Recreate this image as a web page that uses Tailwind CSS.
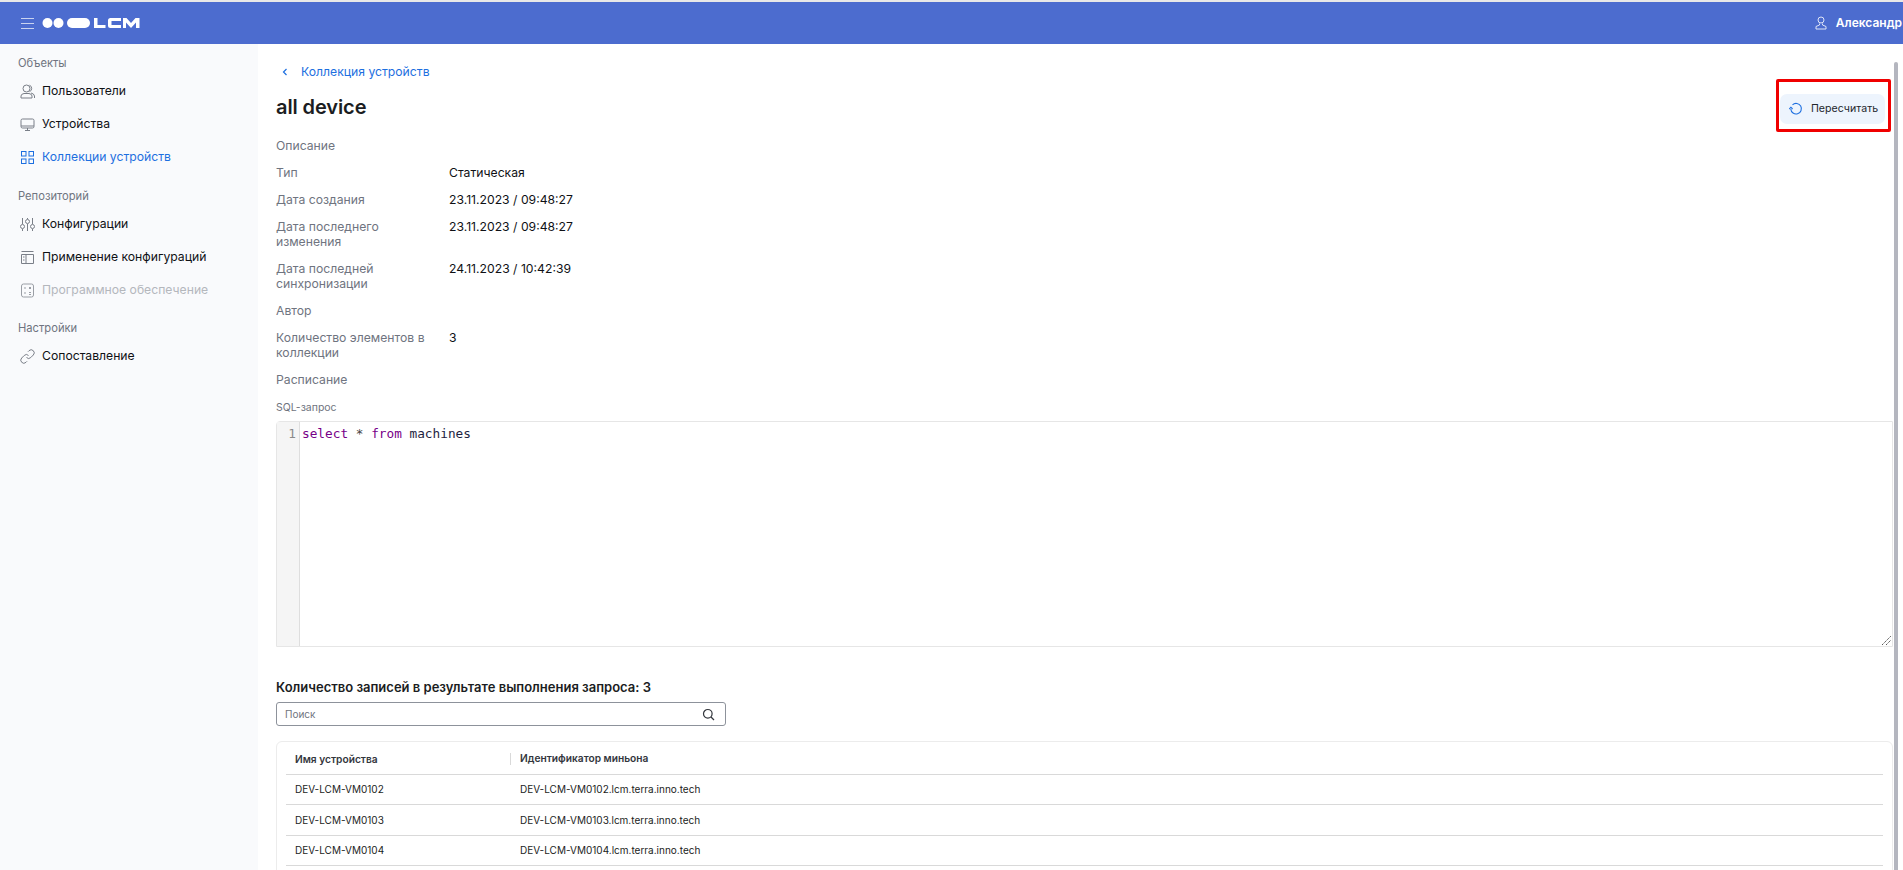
<!doctype html>
<html lang="ru"><head><meta charset="utf-8"><script src="https://cdn.jsdelivr.net/npm/@tailwindcss/browser@4"></script></head>
<body class="font-['Inter',sans-serif] bg-white overflow-hidden">
<div class="h-[870px] w-[1903px] flex flex-col overflow-hidden pt-[2px] bg-[#e8e8e8]">
<header class="h-[42px] shrink-0 bg-[#4c6ccf] flex items-center pl-[21px] text-white">
  <svg width="13" height="13" viewBox="0 0 13 13" class="text-[#c9d3f0]" stroke="currentColor" fill="none"><path d="M0 1.5h13M0 6.5h13M0 11.5h13"/></svg>
  <svg width="99" height="12" viewBox="0 0 99 12" class="ml-[8px]" fill="#fff"><circle cx="5.5" cy="6" r="5"/><circle cx="16.5" cy="6" r="5"/><rect x="25" y="1" width="23" height="10" rx="5"/><path d="M52 1h3.500v7h8v3h-11.500zM66 3.500q0-2.500 2.500-2.500h10.500v3h-9.500v4h9.500v3h-10.500q-2.500 0-2.500-2.500zM81 11v-10h3.500l4.500 5 4.500-5h4v10h-3.500v-5.500l-5 5.500-5-5.500v5.500z"/></svg>
  <div class="ml-auto flex items-center gap-[9px] font-semibold text-[12px] whitespace-nowrap pr-[1px]">
    <svg width="12" height="14" viewBox="0 0 12 14" fill="none" stroke="#dfe5f7"><circle cx="6" cy="4" r="3"/><path d="M4.500 7.500v1.500L1 10.500v2.500h10v-2.500L7.500 9V7.500"/></svg>
    <span>Александр</span>
  </div>
</header>
<div class="flex flex-1 min-h-0 bg-white">
  <aside class="w-[258px] shrink-0 bg-[#f9fafc] pt-[12px] text-[12.2px] text-[#0f1115]">
    <div class="pl-[18px] text-[11.2px] leading-[15px] text-[#6f7480]">Объекты</div>
    <nav class="mt-[4px] flex flex-col">
      <a class="h-[33px] flex items-center pl-[20px] gap-[7px]"><svg width="15" height="15" viewBox="0 0 15 15" fill="none" stroke="#7a7f88"><circle cx="6.500" cy="4.500" r="3.500"/><path d="M1 14v-2q0-2 3-2.500h5q3 .5 3 2.500v2zM9.500 1.200a3.500 3.500 0 0 1 0 6.500M11 9q3 .5 3.500 3v2"/></svg><span>Пользователи</span></a>
      <a class="h-[33px] flex items-center pl-[20px] gap-[7px]"><svg width="15" height="15" viewBox="0 0 15 15" fill="none" stroke="#7a7f88"><rect x="1" y="2" width="13" height="9" rx="1.500"/><path d="M5 13.500h5M7.500 11v2.500"/><path d="M1 9h13"/></svg><span>Устройства</span></a>
      <a class="h-[33px] flex items-center pl-[20px] gap-[7px] text-[#1d6fe0]"><svg width="15" height="15" viewBox="0 0 15 15" fill="none" stroke="#1d6fe0"><rect x="1.500" y="1.500" width="4.500" height="4.500"/><rect x="9" y="1.500" width="4.500" height="4.500"/><rect x="1.500" y="9" width="4.500" height="4.500"/><rect x="9" y="9" width="4.500" height="4.500"/></svg><span>Коллекции устройств</span></a>
    </nav>
    <div class="pl-[18px] mt-[15px] text-[11.2px] leading-[15px] text-[#6f7480]">Репозиторий</div>
    <nav class="mt-[4px] flex flex-col">
      <a class="h-[33px] flex items-center pl-[20px] gap-[7px]"><svg width="15" height="15" viewBox="0 0 15 15" fill="none" stroke="#7a7f88"><path d="M2.500 1v6M2.500 12v2M7.500 1v1M7.500 7v7M12.500 1v6M12.500 12v2"/><circle cx="2.500" cy="9.500" r="2"/><circle cx="7.500" cy="4.500" r="2"/><circle cx="12.500" cy="9.500" r="2"/></svg><span>Конфигурации</span></a>
      <a class="h-[33px] flex items-center pl-[20px] gap-[7px]"><svg width="15" height="15" viewBox="0 0 15 15" fill="none" stroke="#7a7f88"><path d="M1.500 1.500h12M1.500 4.500h12v9h-12zM6 4.500v9"/><path d="M3 7h1.500M3 10h1.500"/></svg><span>Применение конфигураций</span></a>
      <a class="h-[33px] flex items-center pl-[20px] gap-[7px] text-[#b4b7bc]"><svg width="15" height="15" viewBox="0 0 15 15" fill="none" stroke="#9a9ea5"><rect x="1.500" y="1" width="12" height="13" rx="2"/><path d="M4 5h2M9 4l2 2M11 4l-2 2M4 10h2M9 9.500h2M9 11.500h2"/></svg><span>Программное обеспечение</span></a>
    </nav>
    <div class="pl-[18px] mt-[14px] text-[11.2px] leading-[15px] text-[#6f7480]">Настройки</div>
    <nav class="mt-[4px] flex flex-col">
      <a class="h-[33px] flex items-center pl-[20px] gap-[7px]"><svg width="15" height="15" viewBox="0 0 15 15" fill="none" stroke="#7a7f88"><path d="M6.500 8.500a3 3 0 0 0 4.300 0l2.500-2.500a3 3 0 0 0-4.300-4.300l-1 1M8.500 6.500a3 3 0 0 0-4.300 0L1.700 9a3 3 0 0 0 4.300 4.300l1-1"/></svg><span>Сопоставление</span></a>
    </nav>
  </aside>
  <main class="relative flex-1 min-w-0 pl-[18px] pr-[10px] pt-[20px] text-[12.2px] overflow-hidden">
    <div class="flex items-center h-[16px] text-[#1d6fe0]"><svg width="8" height="8" viewBox="0 0 8 8" fill="none" stroke="#1d6fe0" stroke-width="1.200" class="ml-[5px]"><path d="M5.500 1 2.500 4l3 3"/></svg><span class="ml-[12px]">Коллекция устройств</span></div>
    <h1 class="mt-[13px] text-[20px] leading-[28px] font-semibold text-[#1b1d22] tracking-[-0.1px]">all device</h1>
    <dl class="mt-[17px] grid grid-cols-[173px_1fr] gap-y-[12px] leading-[15px] text-[#0f1115]">
      <dt class="text-[#6f7480] w-[155px]">Описание</dt><dd></dd>
      <dt class="text-[#6f7480] w-[155px]">Тип</dt><dd>Статическая</dd>
      <dt class="text-[#6f7480] w-[155px]">Дата создания</dt><dd>23.11.2023 / 09:48:27</dd>
      <dt class="text-[#6f7480] w-[155px]">Дата последнего изменения</dt><dd>23.11.2023 / 09:48:27</dd>
      <dt class="text-[#6f7480] w-[155px]">Дата последней синхронизации</dt><dd>24.11.2023 / 10:42:39</dd>
      <dt class="text-[#6f7480] w-[155px]">Автор</dt><dd></dd>
      <dt class="text-[#6f7480] w-[155px]">Количество элементов в коллекции</dt><dd>3</dd>
      <dt class="text-[#6f7480] w-[155px]">Расписание</dt><dd></dd>
    </dl>
    <div class="mt-[14px] text-[10.5px] leading-[14px] text-[#6f7480]">SQL-запрос</div>
    <div class="relative mt-[6px] h-[226px] w-[1617px] flex border border-[#e6e6e6] rounded-tl-[4px]">
      <div class="w-[23px] bg-[#f5f5f5] border-r border-[#dedede] text-right pr-[3px] pt-[4px] font-['DejaVu_Sans_Mono',monospace] text-[12.75px] leading-[16px] text-[#8a8a8a]">1</div>
      <div class="pl-[2px] pt-[4px] font-['DejaVu_Sans_Mono',monospace] text-[12.75px] leading-[16px] text-[#1e1e3f]"><span class="text-[#770088]">select</span> <span class="text-[#444]">*</span> <span class="text-[#770088]">from</span> machines</div>
      <svg width="9" height="9" viewBox="0 0 9 9" class="absolute right-[1px] bottom-[1px]" stroke="#555" stroke-dasharray="1.500 .7"><path d="M0 9 9 0M4 9l5-5"/></svg>
    </div>
    <h2 class="mt-[32px] text-[13px] leading-[16px] font-semibold text-[#1b1d22]">Количество записей в результате выполнения запроса: 3</h2>
    <div class="mt-[7px] w-[450px] h-[24px] border border-[#8d929b] rounded-[3px] flex items-center pl-[8px] pr-[10px] text-[10px] text-[#6f7480]"><span>Поиск</span><svg width="13" height="13" viewBox="0 0 13 13" class="ml-auto" fill="none" stroke="#33363c" stroke-width="1.200"><circle cx="5.800" cy="5.800" r="4.300"/><path d="m9 9 3 3"/></svg></div>
    <div class="mt-[15px] w-[1617px] border border-[#ececec] rounded-t-[6px] px-[9px] h-[200px] text-[10px] text-[#1b1d22]">
      <div class="h-[33px] pt-[1px] border-b border-[#d9d9d9] flex items-center font-semibold text-[10.2px] text-[#33363c]"><div class="w-[225px] pl-[9px] border-r border-[#d9d9d9] leading-[12px]">Имя устройства</div><div class="pl-[9px]">Идентификатор миньона</div></div>
      <div class="h-[30.4px] border-b border-[#d9d9d9] flex items-center"><div class="w-[225px] pl-[9px]">DEV-LCM-VM0102</div><div class="pl-[9px]">DEV-LCM-VM0102.lcm.terra.inno.tech</div></div>
      <div class="h-[30.4px] border-b border-[#d9d9d9] flex items-center"><div class="w-[225px] pl-[9px]">DEV-LCM-VM0103</div><div class="pl-[9px]">DEV-LCM-VM0103.lcm.terra.inno.tech</div></div>
      <div class="h-[30.4px] border-b border-[#d9d9d9] flex items-center"><div class="w-[225px] pl-[9px]">DEV-LCM-VM0104</div><div class="pl-[9px]">DEV-LCM-VM0104.lcm.terra.inno.tech</div></div>
    </div>
    <button class="absolute left-[1522px] top-[50px] w-[105px] h-[30px] rounded-[7px] bg-[#edf4fd] flex items-center pl-[9px] text-[10.6px] text-[#23262c]"><svg width="14" height="14" viewBox="0 0 14 14" fill="none" stroke="#1d6fe0" stroke-width="1.100"><path d="M3.500 2.800A5.300 5.300 0 1 1 1.800 7"/><path d="M.2 7 1.900 5.200 3.600 7"/></svg><span class="ml-[8px]">Пересчитать</span></button>
    <div class="absolute left-[1518px] top-[35px] w-[115px] h-[53px] border-[3px] border-[#f00000] rounded-[2px]"></div>
    <div class="absolute left-[1636px] top-[18px] bottom-0 w-[4px] bg-[#b4b6bf] rounded-t-[2px]"></div>
  </main>
</div>
</div>
</body></html>
